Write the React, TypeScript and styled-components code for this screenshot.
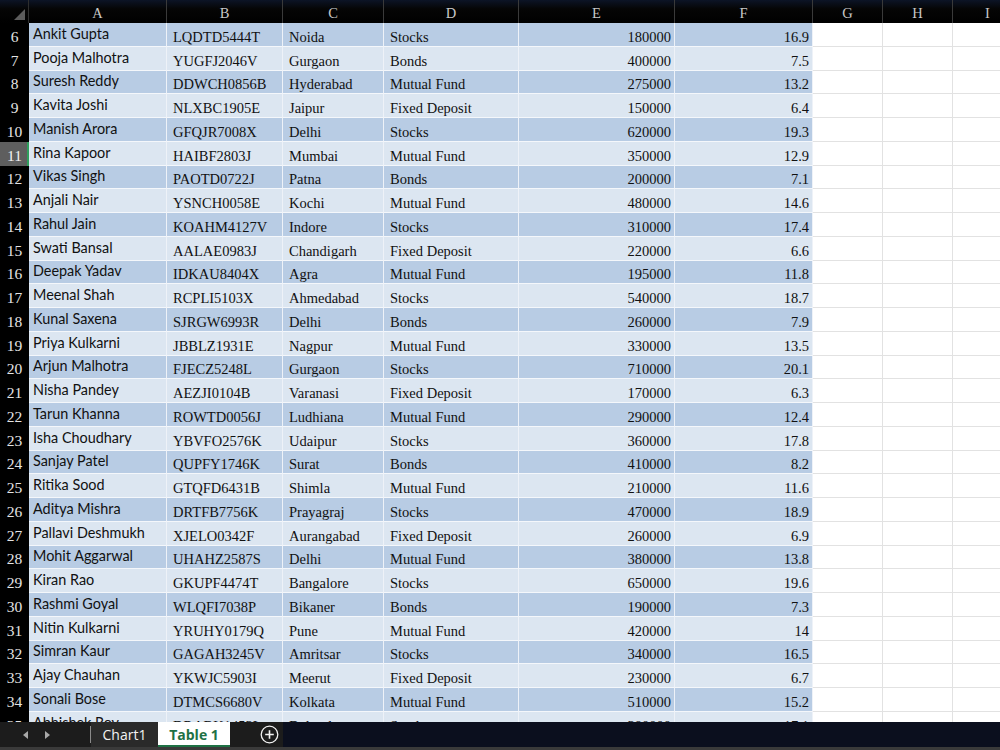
import React from "react";
import styled, { createGlobalStyle, css } from "styled-components";

const GlobalStyle = createGlobalStyle`
  html, body { margin: 0; padding: 0; background: #000; overflow: hidden; }
  * { box-sizing: border-box; }
`;

type Row = [string, string, string, string, number, number];

const rows: Row[] = [
  ["Ankit Gupta", "LQDTD5444T", "Noida", "Stocks", 180000, 16.9],
  ["Pooja Malhotra", "YUGFJ2046V", "Gurgaon", "Bonds", 400000, 7.5],
  ["Suresh Reddy", "DDWCH0856B", "Hyderabad", "Mutual Fund", 275000, 13.2],
  ["Kavita Joshi", "NLXBC1905E", "Jaipur", "Fixed Deposit", 150000, 6.4],
  ["Manish Arora", "GFQJR7008X", "Delhi", "Stocks", 620000, 19.3],
  ["Rina Kapoor", "HAIBF2803J", "Mumbai", "Mutual Fund", 350000, 12.9],
  ["Vikas Singh", "PAOTD0722J", "Patna", "Bonds", 200000, 7.1],
  ["Anjali Nair", "YSNCH0058E", "Kochi", "Mutual Fund", 480000, 14.6],
  ["Rahul Jain", "KOAHM4127V", "Indore", "Stocks", 310000, 17.4],
  ["Swati Bansal", "AALAE0983J", "Chandigarh", "Fixed Deposit", 220000, 6.6],
  ["Deepak Yadav", "IDKAU8404X", "Agra", "Mutual Fund", 195000, 11.8],
  ["Meenal Shah", "RCPLI5103X", "Ahmedabad", "Stocks", 540000, 18.7],
  ["Kunal Saxena", "SJRGW6993R", "Delhi", "Bonds", 260000, 7.9],
  ["Priya Kulkarni", "JBBLZ1931E", "Nagpur", "Mutual Fund", 330000, 13.5],
  ["Arjun Malhotra", "FJECZ5248L", "Gurgaon", "Stocks", 710000, 20.1],
  ["Nisha Pandey", "AEZJI0104B", "Varanasi", "Fixed Deposit", 170000, 6.3],
  ["Tarun Khanna", "ROWTD0056J", "Ludhiana", "Mutual Fund", 290000, 12.4],
  ["Isha Choudhary", "YBVFO2576K", "Udaipur", "Stocks", 360000, 17.8],
  ["Sanjay Patel", "QUPFY1746K", "Surat", "Bonds", 410000, 8.2],
  ["Ritika Sood", "GTQFD6431B", "Shimla", "Mutual Fund", 210000, 11.6],
  ["Aditya Mishra", "DRTFB7756K", "Prayagraj", "Stocks", 470000, 18.9],
  ["Pallavi Deshmukh", "XJELO0342F", "Aurangabad", "Fixed Deposit", 260000, 6.9],
  ["Mohit Aggarwal", "UHAHZ2587S", "Delhi", "Mutual Fund", 380000, 13.8],
  ["Kiran Rao", "GKUPF4474T", "Bangalore", "Stocks", 650000, 19.6],
  ["Rashmi Goyal", "WLQFI7038P", "Bikaner", "Bonds", 190000, 7.3],
  ["Nitin Kulkarni", "YRUHY0179Q", "Pune", "Mutual Fund", 420000, 14],
  ["Simran Kaur", "GAGAH3245V", "Amritsar", "Stocks", 340000, 16.5],
  ["Ajay Chauhan", "YKWJC5903I", "Meerut", "Fixed Deposit", 230000, 6.7],
  ["Sonali Bose", "DTMCS6680V", "Kolkata", "Mutual Fund", 510000, 15.2],
  ["Abhishek Roy", "DRABK1453L", "Dehradun", "Stocks", 380000, 17.1],
];

const FIRST_ROW = 6;
const ACTIVE_ROW = 11;
const columns = ["A", "B", "C", "D", "E", "F", "G", "H", "I"];
const COLS = "29px 138px 116px 101px 135px 156px 138px 70px 70px 70px";

const Page = styled.div`
  width: 1000px;
  height: 750px;
  display: flex;
  flex-direction: column;
  background: #000;
  overflow: hidden;
`;

const Sheet = styled.div`
  flex: 1;
  min-height: 0;
  overflow: hidden;
  display: grid;
  grid-template-columns: ${COLS};
  grid-auto-rows: 23.75px;
  grid-template-rows: 23px;
  width: 1023px;
  align-content: start;
`;

const Corner = styled.div`
  background: linear-gradient(#0c1426 0px, #050505 9px, #000 100%);
  border-right: 1px solid #2e2e2e;
  position: relative;
  &::after {
    content: "";
    position: absolute;
    right: 3px;
    bottom: 3px;
    border-left: 11px solid transparent;
    border-bottom: 11px solid #5c5c5c;
  }
`;

const ColHead = styled.div`
  background: linear-gradient(#0c1426 0px, #050505 9px, #000 100%);
  border-right: 1px solid #3a3a3a;
  color: #c8c8c8;
  font-family: "Liberation Serif", serif;
  font-size: 14.5px;
  display: flex;
  align-items: center;
  justify-content: center;
  padding-top: 4px;
`;

const RowHead = styled.div<{ $active?: boolean }>`
  background: ${(p) => (p.$active ? "#5e5e5e" : "#000")};
  border-right: 2px solid ${(p) => (p.$active ? "#2f9e5c" : "#000")};
  color: ${(p) => (p.$active ? "#f0f0f0" : "#e4e4e4")};
  font-family: "Liberation Serif", serif;
  font-size: 15.5px;
  display: flex;
  align-items: flex-end;
  justify-content: center;
  padding: 0 0 1px 2px;
`;

const Cell = styled.div<{ $band?: "dark" | "light" | "none"; $kind: "name" | "text" | "num" }>`
  border-right: 1px solid
    ${(p) => (p.$band === "none" ? "#e2e2e2" : "#eef2f8")};
  border-bottom: 1px solid
    ${(p) => (p.$band === "none" ? "#e2e2e2" : "#f4f7fb")};
  background: ${(p) =>
    p.$band === "dark" ? "#b8cce4" : p.$band === "light" ? "#dce6f1" : "#fff"};
  color: #111;
  display: flex;
  align-items: flex-end;
  white-space: nowrap;
  overflow: hidden;
  ${(p) =>
    p.$kind === "name"
      ? css`
          font-family: Lato, "Open Sans", sans-serif;
          font-size: 14.4px;
          padding: 0 0 4px 4px;
        `
      : p.$kind === "num"
      ? css`
          font-family: "Liberation Serif", serif;
          font-size: 14.5px;
          justify-content: flex-end;
          padding: 0 3px 0 0;
        `
      : css`
          font-family: "Liberation Serif", serif;
          font-size: 14.5px;
          padding: 0 0 0 6px;
        `}
`;

const TabBar = styled.div`
  height: 25px;
  display: flex;
  align-items: stretch;
  background: #0b0f1e;
`;

const TabStrip = styled.div`
  width: 283px;
  display: flex;
  align-items: stretch;
  background: #1c1c1c;
`;

const NavArrows = styled.div`
  width: 91px;
  display: flex;
  align-items: center;
  gap: 17px;
  padding-left: 23px;
  border-right: 1px solid #8a8a8a;
  margin: 4px 0;
`;

const Arrow = styled.span<{ $dir: "left" | "right" }>`
  width: 0;
  height: 0;
  border-top: 4px solid transparent;
  border-bottom: 4px solid transparent;
  ${(p) =>
    p.$dir === "left"
      ? css`border-right: 5px solid #a8a8a8;`
      : css`border-left: 5px solid #a8a8a8;`}
`;

const Tab = styled.div<{ $active?: boolean }>`
  display: flex;
  align-items: center;
  justify-content: center;
  font-family: "Open Sans", "Noto Sans", sans-serif;
  font-size: 14px;
  ${(p) =>
    p.$active
      ? css`
          width: 72px;
          background: #fff;
          color: #1e7145;
          font-weight: 700;
          border-bottom: 2px solid #1e7145;
          padding-top: 1px;
        `
      : css`
          width: 67px;
          background: #2a2a2a;
          color: #f2f2f2;
        `}
`;

const AddSheet = styled.div`
  flex: 1;
  display: flex;
  align-items: center;
  justify-content: flex-end;
  padding-right: 4px;
`;

const BottomEdge = styled.div`
  height: 3px;
  background: #3a3a3a;
`;

const fmt = (n: number) => String(n);

export default function App() {
  return (
    <Page>
      <GlobalStyle />
      <Sheet>
        <Corner />
        {columns.map((c) => (
          <ColHead key={c}>{c}</ColHead>
        ))}
        {rows.map((r, i) => {
          const n = FIRST_ROW + i;
          const band = i % 2 === 0 ? "dark" : "light";
          return (
            <React.Fragment key={n}>
              <RowHead $active={n === ACTIVE_ROW}>{n}</RowHead>
              <Cell $band={band} $kind="name">{r[0]}</Cell>
              <Cell $band={band} $kind="text">{r[1]}</Cell>
              <Cell $band={band} $kind="text">{r[2]}</Cell>
              <Cell $band={band} $kind="text">{r[3]}</Cell>
              <Cell $band={band} $kind="num">{fmt(r[4])}</Cell>
              <Cell $band={band} $kind="num">{fmt(r[5])}</Cell>
              <Cell $band="none" $kind="text" />
              <Cell $band="none" $kind="text" />
              <Cell $band="none" $kind="text" />
            </React.Fragment>
          );
        })}
      </Sheet>
      <TabBar>
        <TabStrip>
          <NavArrows>
            <Arrow $dir="left" />
            <Arrow $dir="right" />
          </NavArrows>
          <Tab>Chart1</Tab>
          <Tab $active>Table 1</Tab>
          <AddSheet>
            <svg width="19" height="19" viewBox="0 0 19 19">
              <circle cx="9.5" cy="9.5" r="8.3" fill="none" stroke="#f2f2f2" strokeWidth="1.3" />
              <path d="M9.5 5.2v8.6M5.2 9.5h8.6" stroke="#f2f2f2" strokeWidth="1.6" />
            </svg>
          </AddSheet>
        </TabStrip>
      </TabBar>
      <BottomEdge />
    </Page>
  );
}
